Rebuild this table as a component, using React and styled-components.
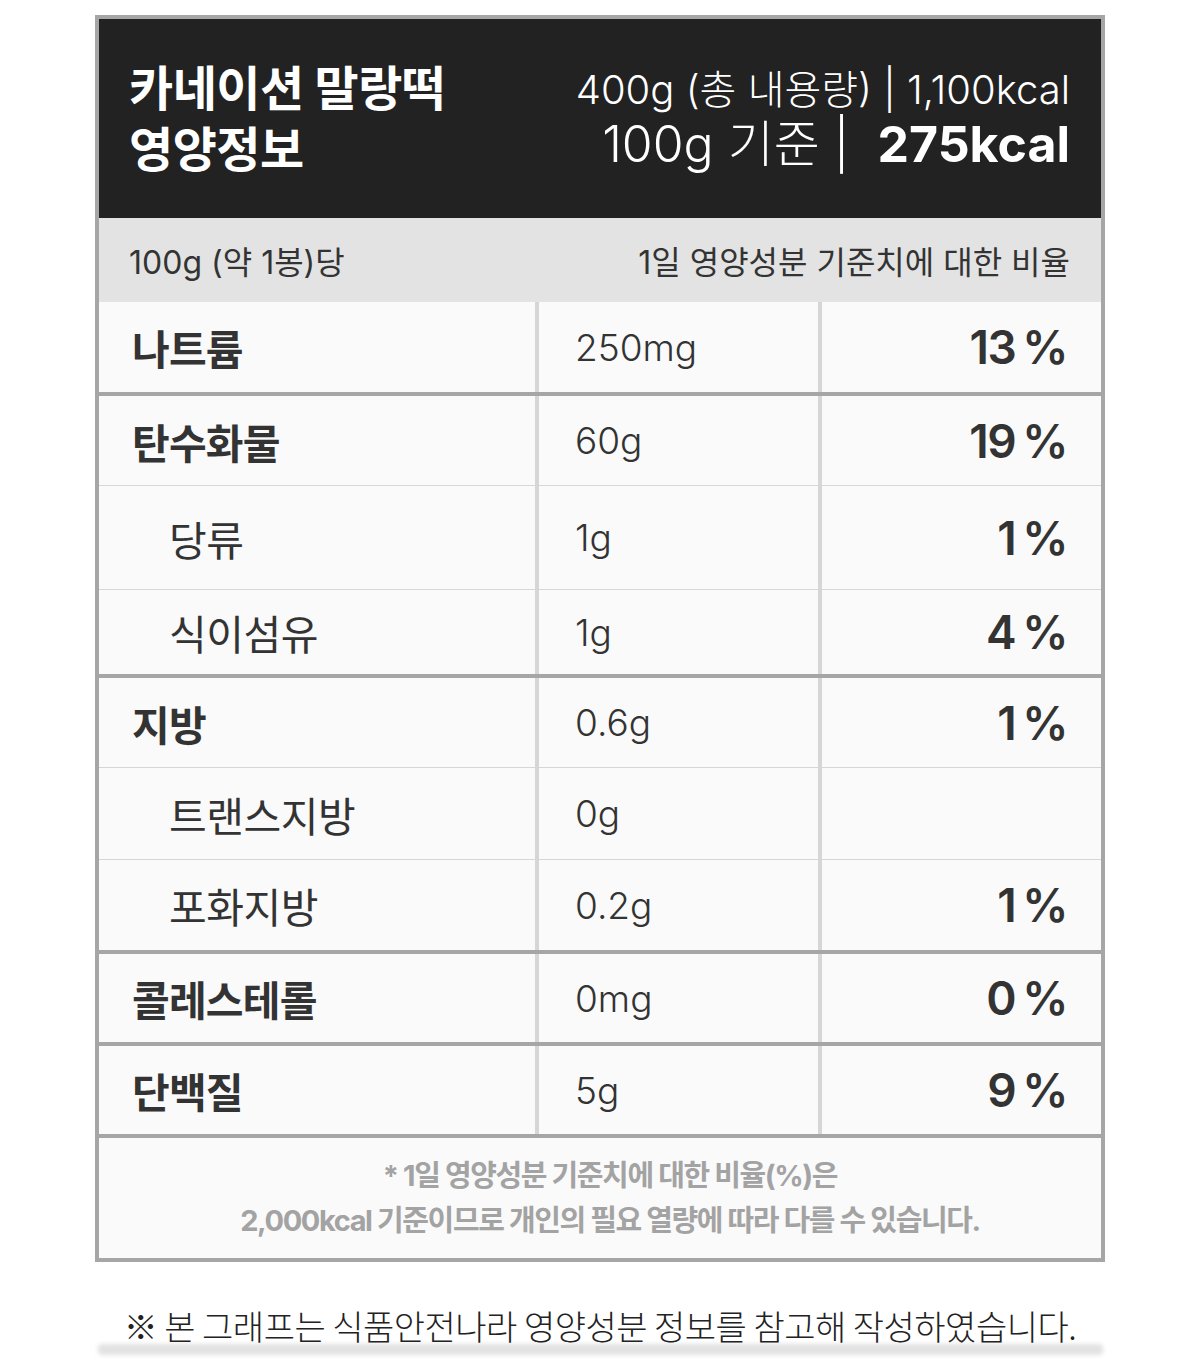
import React from "react";
import styled, { createGlobalStyle } from "styled-components";

const GlobalStyle = createGlobalStyle`
  html, body {
    margin: 0;
    padding: 0;
    background: #ffffff;
  }
  body {
    font-family: "Inter", "Noto Sans CJK KR", "Noto Sans", sans-serif;
    color: #333333;
  }
  * { box-sizing: border-box; }
`;

const Page = styled.div`
  display: flex;
  flex-direction: column;
  align-items: center;
  padding-top: 15px;
  padding-bottom: 10px;
`;

const Card = styled.section`
  width: 1010px;
  border: 4px solid #a6a6a6;
  background: #fafafa;
`;

const Header = styled.header`
  height: 199px;
  background: #222222;
  display: flex;
  align-items: center;
  justify-content: space-between;
  padding: 0 31px 0 30px;
  color: #ffffff;
`;

const Title = styled.h1`
  margin: 0;
  font-size: 48px;
  line-height: 61px;
  font-weight: 700;
  letter-spacing: -0.5px;
`;

const Summary = styled.div`
  display: flex;
  flex-direction: column;
  align-items: flex-end;
`;

const SummaryLine = styled.div`
  font-size: ${(p) => p.$size}px;
  line-height: ${(p) => p.$lh}px;
  font-weight: 300;
  letter-spacing: ${(p) => p.$ls || 0}px;
  white-space: pre;
`;

const Strong = styled.span`
  font-weight: 700;
`;

const SubHeader = styled.div`
  height: 84px;
  background: #e3e3e3;
  display: flex;
  align-items: center;
  justify-content: space-between;
  padding: 0 31px 0 30px;
  font-size: 32px;
  color: #333333;
`;

const Row = styled.div`
  display: grid;
  grid-template-columns: 436px 283px 283px;
  height: ${(p) => p.$h}px;
  border-top: ${(p) =>
    p.$border === "thick"
      ? "4px solid #a6a6a6"
      : p.$border === "thin"
      ? "1px solid #d6d6d6"
      : "none"};
  box-sizing: content-box;
`;

const NameCell = styled.div`
  display: flex;
  align-items: center;
  padding-left: ${(p) => (p.$sub ? 70 : 33)}px;
  font-size: 41px;
  font-weight: ${(p) => (p.$sub ? 400 : 700)};
  letter-spacing: ${(p) => (p.$sub ? -0.5 : -0.8)}px;
  color: #333333;
`;

const ValueCell = styled.div`
  display: flex;
  align-items: center;
  border-left: 4px solid #d6d6d6;
  padding-left: 36px;
  font-size: 37px;
  font-weight: 300;
  color: #333333;
`;

const PercentCell = styled.div`
  display: flex;
  align-items: center;
  justify-content: flex-end;
  border-left: 4px solid #d6d6d6;
  padding-right: 34px;
  font-size: 46px;
  font-weight: 600;
  color: #333333;
  letter-spacing: -1.5px;
  word-spacing: -3px;
`;

const Footnote = styled.div`
  height: 120px;
  border-top: 4px solid #a6a6a6;
  box-sizing: content-box;
  display: flex;
  flex-direction: column;
  align-items: center;
  justify-content: center;
  padding-left: 20px;
  color: #a3a3a3;
  font-size: 29px;
  line-height: 45px;
  font-weight: 700;
  letter-spacing: -1.4px;
`;

const NoteArea = styled.div`
  margin-top: 44px;
  display: flex;
  flex-direction: column;
  align-items: center;
`;

const Note = styled.p`
  margin: 0;
  font-family: "Noto Sans CJK KR", sans-serif;
  font-size: 34px;
  line-height: 40px;
  font-weight: 300;
  color: #222222;
  letter-spacing: -0.5px;
  position: relative;
  z-index: 1;
`;

const Smudge = styled.div`
  width: 1005px;
  height: 11px;
  margin-top: -2px;
  background: #e2e2e2;
  filter: blur(2px);
  border-radius: 4px;
`;

const rows = [
  { name: "나트륨", value: "250mg", pct: "13 %", h: 90, border: "none" },
  { name: "탄수화물", value: "60g", pct: "19 %", h: 89, border: "thick" },
  { name: "당류", value: "1g", pct: "1 %", h: 103, border: "thin", sub: true },
  { name: "식이섬유", value: "1g", pct: "4 %", h: 84, border: "thin", sub: true },
  { name: "지방", value: "0.6g", pct: "1 %", h: 89, border: "thick" },
  { name: "트랜스지방", value: "0g", pct: "", h: 91, border: "thin", sub: true },
  { name: "포화지방", value: "0.2g", pct: "1 %", h: 90, border: "thin", sub: true },
  { name: "콜레스테롤", value: "0mg", pct: "0 %", h: 88, border: "thick" },
  { name: "단백질", value: "5g", pct: "9 %", h: 88, border: "thick" },
];

export default function App() {
  return (
    <>
      <GlobalStyle />
      <Page>
        <Card>
          <Header>
            <Title>
              카네이션 말랑떡
              <br />
              영양정보
            </Title>
            <Summary>
              <SummaryLine $size={40} $lh={50} $ls={0}>
                400g (총 내용량) | 1,100kcal
              </SummaryLine>
              <SummaryLine $size={50} $lh={58} $ls={0}>
                100g 기준 |  <Strong>275kcal</Strong>
              </SummaryLine>
            </Summary>
          </Header>
          <SubHeader>
            <span>100g (약 1봉)당</span>
            <span>1일 영양성분 기준치에 대한 비율</span>
          </SubHeader>
          {rows.map((r) => (
            <Row key={r.name} $h={r.h} $border={r.border}>
              <NameCell $sub={r.sub}>{r.name}</NameCell>
              <ValueCell>{r.value}</ValueCell>
              <PercentCell>{r.pct}</PercentCell>
            </Row>
          ))}
          <Footnote>
            <span>* 1일 영양성분 기준치에 대한 비율(%)은</span>
            <span>2,000kcal 기준이므로 개인의 필요 열량에 따라 다를 수 있습니다.</span>
          </Footnote>
        </Card>
        <NoteArea>
          <Note>※ 본 그래프는 식품안전나라 영양성분 정보를 참고해 작성하였습니다.</Note>
          <Smudge />
        </NoteArea>
      </Page>
    </>
  );
}
